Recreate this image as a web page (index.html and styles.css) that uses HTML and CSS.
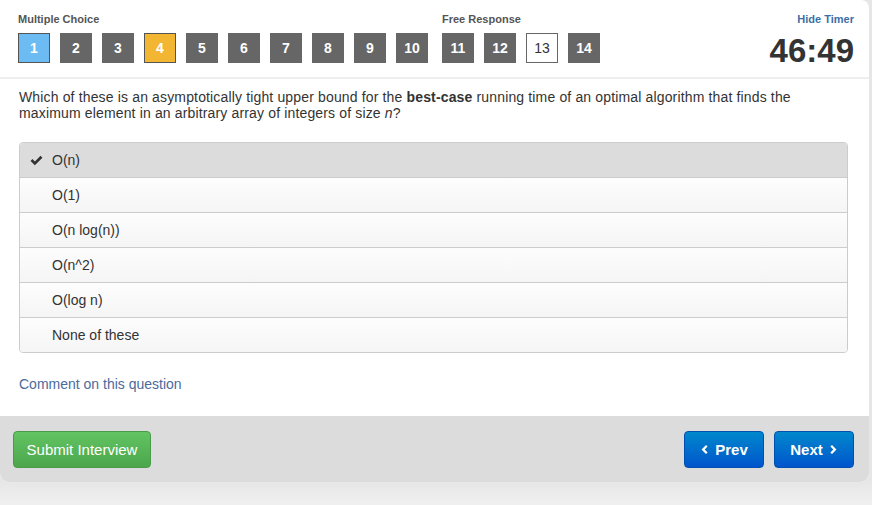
FILE: index.html
```html
<!DOCTYPE html>
<html>
<head>
<meta charset="utf-8">
<link rel="stylesheet" href="styles.css">
</head>
<body>
<div class="card">
  <div class="header">
    <div class="groups">
      <div class="group">
        <div class="label">Multiple Choice</div>
        <div class="nums">
          <span class="num current">1</span><span class="num">2</span><span class="num">3</span><span class="num flagged">4</span><span class="num">5</span><span class="num">6</span><span class="num">7</span><span class="num">8</span><span class="num">9</span><span class="num">10</span>
        </div>
      </div>
      <div class="group group2">
        <div class="label">Free Response</div>
        <div class="nums">
          <span class="num">11</span><span class="num">12</span><span class="num open">13</span><span class="num">14</span>
        </div>
      </div>
    </div>
    <div class="timer">
      <a class="hide">Hide Timer</a>
      <div class="time">46:49</div>
    </div>
  </div>
  <div class="body">
    <p class="question">Which of these is an asymptotically tight upper bound for the <b>best-case</b> running time of an optimal algorithm that finds the maximum element in an arbitrary array of integers of size <i>n</i>?</p>
    <ul class="options">
      <li class="selected"><svg class="check" viewBox="0 0 14 12" width="13" height="11"><path d="M0.5 6.5 L2.6 4.4 L5.2 7 L11.4 0.8 L13.5 2.9 L5.2 11.2 Z" fill="#333"/></svg>O(n)</li>
      <li>O(1)</li>
      <li>O(n log(n))</li>
      <li>O(n^2)</li>
      <li>O(log n)</li>
      <li>None of these</li>
    </ul>
    <a class="comment">Comment on this question</a>
  </div>
  <div class="footer">
    <button class="btn submit">Submit Interview</button>
    <div class="nav">
      <button class="btn primary"><svg viewBox="0 0 8 10" width="8" height="11"><path d="M6 0.5 L7.6 2.1 L4.7 5 L7.6 7.9 L6 9.5 L1.5 5 Z" fill="#fff"/></svg>Prev</button>
      <button class="btn primary">Next<svg viewBox="0 0 8 10" width="8" height="11"><path d="M2 0.5 L0.4 2.1 L3.3 5 L0.4 7.9 L2 9.5 L6.5 5 Z" fill="#fff"/></svg></button>
    </div>
  </div>
</div>
</body>
</html>
```
FILE: styles.css
```css
* { box-sizing: border-box; }
html, body { margin: 0; padding: 0; }
body {
  background: linear-gradient(#e6e6e6 0, #e6e6e6 480px, #f0f0f0 505px);
  font-family: "Liberation Sans", Arial, sans-serif;
  color: #333;
  height: 505px;
  overflow: hidden;
}
.card {
  width: 869px;
  background: #fff;
  border-radius: 0 8px 9px 9px;
  overflow: hidden;
}
.header {
  display: flex;
  justify-content: space-between;
  height: 79px;
  padding: 12px 15px 0 18px;
  border-bottom: 2px solid #eee;
}
.groups { display: flex; }
.group2 { margin-left: 4px; }
.label {
  font-size: 11px;
  font-weight: bold;
  color: #555;
  line-height: 14px;
  margin-bottom: 7px;
}
.nums { display: flex; }
.num {
  width: 32px;
  height: 30px;
  margin-right: 10px;
  background: #666;
  border: 1px solid #666;
  color: #fff;
  font-weight: bold;
  font-size: 14px;
  display: flex;
  align-items: center;
  justify-content: center;
}
.num.current { background: #6cbcf3; border-color: #555; }
.num.flagged { background: #f2b632; border-color: #555; }
.num.open { background: #fff; color: #333; font-weight: normal; border-color: #666; }
.timer { text-align: right; }
.hide {
  display: block;
  font-size: 11px;
  font-weight: bold;
  color: #3d6fa6;
  line-height: 14px;
}
.time {
  font-size: 33px;
  font-weight: bold;
  line-height: 32px;
  margin-top: 9px;
  color: #333;
}
.body { padding: 10px 21px 24px 19px; }
.question {
  max-width: 800px;
  margin: 0 0 21px;
  font-size: 14px;
  line-height: 16px;
  letter-spacing: 0.15px;
}
.options {
  list-style: none;
  margin: 0;
  padding: 0;
  border: 1px solid #ccc;
  border-radius: 4px;
  overflow: hidden;
}
.options li {
  height: 35px;
  display: flex;
  align-items: center;
  padding-left: 32px;
  font-size: 14px;
  border-top: 1px solid #ccc;
  background: linear-gradient(#fdfdfd, #f5f5f5);
  position: relative;
}
.options li:first-child { border-top: none; height: 34px; }
.options li.selected { background: #dcdcdc; }
.check { position: absolute; left: 10px; top: 12px; }
.comment {
  display: block;
  margin-top: 24px;
  font-size: 14px;
  line-height: 15px;
  color: #4c6a9c;
}
.footer {
  background: #dcdcdc;
  height: 66px;
  padding: 15px 15px 0 13px;
  display: flex;
  justify-content: space-between;
  align-items: flex-start;
}
.btn {
  height: 37px;
  border-radius: 4px;
  font-family: "Liberation Sans", Arial, sans-serif;
  font-size: 15px;
  color: #fff;
  cursor: pointer;
  display: inline-flex;
  align-items: center;
  justify-content: center;
}
.submit {
  width: 138px;
  background: linear-gradient(#62c462, #4ca64c);
  border: 1px solid #4a9a4a;
}
.nav { display: flex; gap: 10px; }
.primary {
  width: 80px;
  font-weight: bold;
  background: linear-gradient(#0088cc, #0055cc);
  border: 1px solid #0050b0;
  gap: 7px;
}
```
